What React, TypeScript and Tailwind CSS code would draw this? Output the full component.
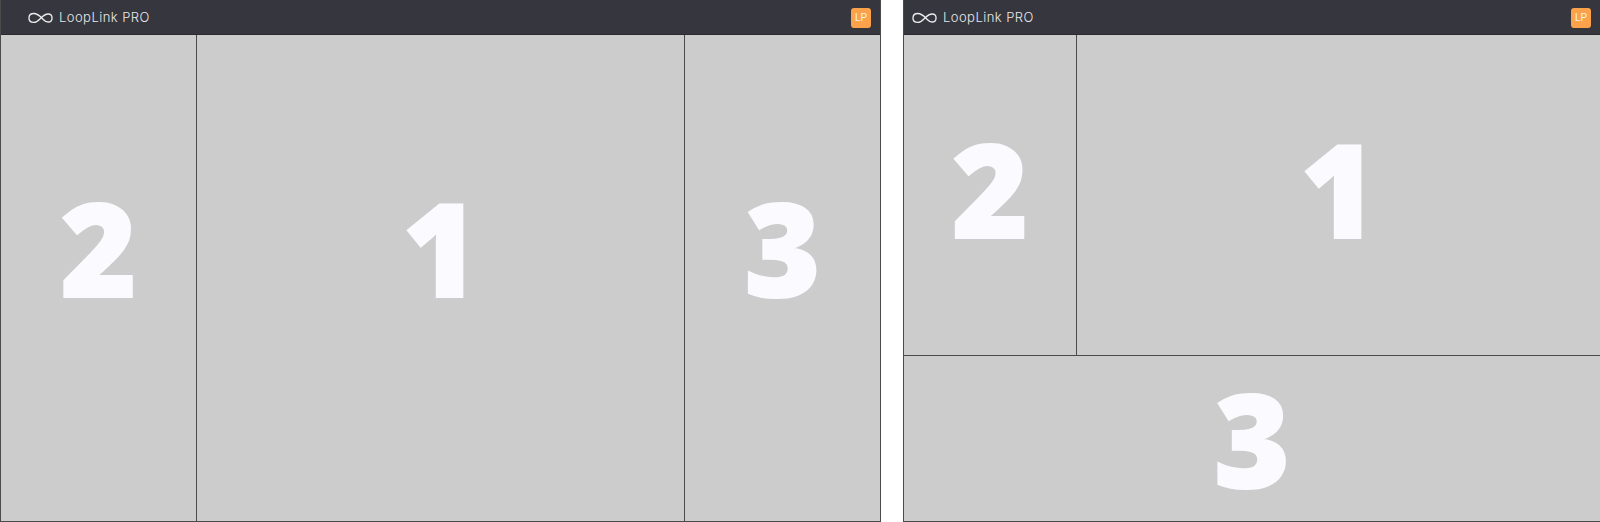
const Logo = () => (
  <svg width="25" height="12" viewBox="0 0 26 12" fill="none" className="shrink-0">
    <path d="M1 6.2C1 3.2 3 1.3 6 1.3C10.5 1.3 13.5 5.2 15.5 7.2C17.2 8.9 19 10.2 21 10.2C23.6 10.2 25 8.6 25 6C25 3.4 23.6 1.8 21 1.8C17.5 1.8 15 4.4 13 6.4C11 8.4 9 10.6 6 10.6C3 10.6 1 9.2 1 6.2Z" stroke="#ececee" strokeWidth="1.4" />
  </svg>
);

const Header = ({ pad }: { pad: string }) => (
  <div className={`h-[35px] shrink-0 bg-[#36363f] border-b border-[#2a2a30] flex items-center justify-between pr-[9px] ${pad}`}>
    <div className="flex items-center gap-[6px] mt-px">
      <Logo />
      <span className="text-[13px] tracking-[0.45px] text-[#e8e8ea] font-['Inter',sans-serif] font-light">LoopLink PRO</span>
    </div>
    <div className="w-[20px] h-[20px] mt-px rounded-[3px] bg-[#fca24a] flex items-center justify-center text-[10px] text-[#fff4e6] font-['Liberation_Sans',sans-serif]">LP</div>
  </div>
);

const Cell = ({ n, className }: { n: string; className: string }) => (
  <div className={`bg-[#cccccc] flex items-center justify-center text-[130px] leading-none font-extrabold text-[#fafaff] [-webkit-text-stroke:2px_#fafaff] font-['Open_Sans',sans-serif] ${className}`}>{n}</div>
);

export default function App() {
  return (
    <div className="w-[1600px] h-[522px] bg-white flex justify-between overflow-hidden">
      <div className="w-[881px] h-full flex flex-col border-r border-b border-l border-[#4a4a4a]">
        <Header pad="pl-[27px]" />
        <div className="flex-1 flex">
          <Cell n="2" className="w-[196px] border-r border-[#4a4a4a] pb-[63px]" />
          <Cell n="1" className="w-[488px] border-r border-[#4a4a4a] pb-[63px]" />
          <Cell n="3" className="flex-1 pb-[63px]" />
        </div>
      </div>
      <div className="w-[697px] h-full flex flex-col border-l border-b border-[#4a4a4a]">
        <Header pad="pl-[8px]" />
        <div className="h-[321px] flex border-b border-[#4a4a4a]">
          <Cell n="2" className="w-[173px] border-r border-[#4a4a4a] pb-[15px]" />
          <Cell n="1" className="flex-1 pb-[15px]" />
        </div>
        <Cell n="3" className="flex-1 pb-[2px]" />
      </div>
    </div>
  );
}
